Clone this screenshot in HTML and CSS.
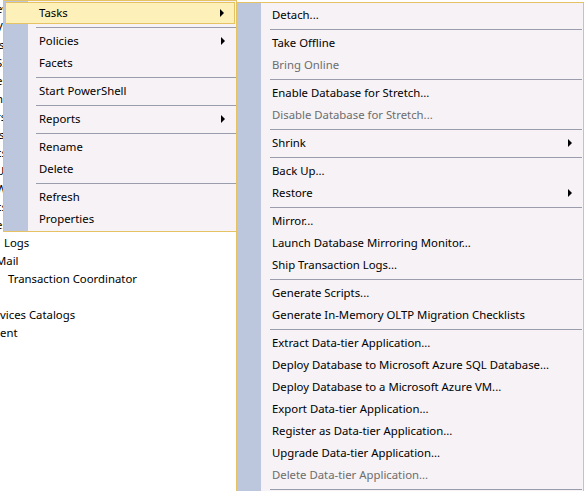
FILE: index.html
```html
<!DOCTYPE html>
<html lang="en">
<head>
  <meta charset="UTF-8">
  <title>Tasks menu</title>
  <link rel="stylesheet" href="styles.css">
</head>
<body>
  <!-- object explorer behind the context menu -->
  <div class="tree">
    <div class="node cut">ew</div>
    <div class="node cut">Vs</div>
    <div class="node cut">:s</div>
    <div class="node cut">Ss</div>
    <div class="node cut">es</div>
    <div class="node cut">hs</div>
    <div class="node cut">rs</div>
    <div class="node cut">ls</div>
    <div class="node cut">cs</div>
    <div class="node cut">Us</div>
    <div class="node cut">Ws</div>
    <div class="node cut">cs</div>
    <div class="node cut">es</div>
    <div class="node logs">Logs</div>
    <div class="node mail">Mail</div>
    <div class="node dtc">Transaction Coordinator</div>
    <div class="node"></div>
    <div class="node">vices Catalogs</div>
    <div class="node">ent</div>
  </div>

  <div class="menu menu-main">
    <div class="item active">Tasks<span class="arrow"></span></div>
    <div class="sep"></div>
    <div class="item">Policies<span class="arrow"></span></div>
    <div class="item">Facets</div>
    <div class="sep"></div>
    <div class="item">Start PowerShell</div>
    <div class="sep"></div>
    <div class="item">Reports<span class="arrow"></span></div>
    <div class="sep"></div>
    <div class="item">Rename</div>
    <div class="item">Delete</div>
    <div class="sep"></div>
    <div class="item">Refresh</div>
    <div class="item">Properties</div>
  </div>

  <div class="menu menu-sub">
    <div class="item">Detach...</div>
    <div class="sep"></div>
    <div class="item">Take Offline</div>
    <div class="item disabled">Bring Online</div>
    <div class="sep"></div>
    <div class="item">Enable Database for Stretch...</div>
    <div class="item disabled">Disable Database for Stretch...</div>
    <div class="sep"></div>
    <div class="item">Shrink<span class="arrow"></span></div>
    <div class="sep"></div>
    <div class="item">Back Up...</div>
    <div class="item">Restore<span class="arrow"></span></div>
    <div class="sep"></div>
    <div class="item">Mirror...</div>
    <div class="item">Launch Database Mirroring Monitor...</div>
    <div class="item">Ship Transaction Logs...</div>
    <div class="sep"></div>
    <div class="item">Generate Scripts...</div>
    <div class="item">Generate In-Memory OLTP Migration Checklists</div>
    <div class="sep"></div>
    <div class="item">Extract Data-tier Application...</div>
    <div class="item">Deploy Database to Microsoft Azure SQL Database...</div>
    <div class="item">Deploy Database to a Microsoft Azure VM...</div>
    <div class="item">Export Data-tier Application...</div>
    <div class="item">Register as Data-tier Application...</div>
    <div class="item">Upgrade Data-tier Application...</div>
    <div class="item disabled">Delete Data-tier Application...</div>
    <div class="sep"></div>
    <div class="item">Import Data...</div>
    <div class="item">Export Data...</div>
  </div>
</body>
</html>
```

FILE: styles.css
```css
html, body {
  margin: 0;
  padding: 0;
  height: 100%;
  overflow: hidden;
}
body {
  position: relative;
  background: #fff;
  color: #000;
  font-family: "Noto Sans", "Open Sans", sans-serif;
  font-size: 11.35px;
}

.tree {
  padding-top: 0;
}
.node {
  height: 18px;
  line-height: 18px;
  white-space: nowrap;
}
.node.cut {
  margin-left: -4px;
}
.node.logs {
  margin-left: 4px;
}
.node.mail {
  margin-left: -4px;
}
.node.dtc {
  margin-left: 8px;
}

.menu {
  position: absolute;
  box-sizing: border-box;
  border: 1px solid #e5c365;
  padding: 1px 0;
  background: linear-gradient(to right, #bcc7de 24px, #f6f2f6 24px);
}
.menu-main {
  left: 3px;
  top: 0;
  width: 234px;
}
.menu-sub {
  left: 236px;
  top: 2px;
  width: 348px;
}

.item {
  position: relative;
  box-sizing: border-box;
  height: 22px;
  line-height: 22px;
  padding-left: 35px;
  white-space: nowrap;
}
.item.disabled {
  color: #6d6d6d;
}
.item.active {
  margin: 0 1px;
  border: 1px solid #e5c365;
  background: #fdf0b8;
  line-height: 20px;
  padding-left: 33px;
}
.arrow {
  position: absolute;
  right: 11px;
  top: 7px;
  width: 0;
  height: 0;
  border-style: solid;
  border-width: 4px 0 4px 4px;
  border-color: transparent transparent transparent #000;
}
.item.active .arrow {
  right: 10px;
  top: 6px;
}

.sep {
  height: 6px;
  margin-left: 32px;
  position: relative;
}
.sep::after {
  content: "";
  position: absolute;
  left: 0;
  right: 0;
  top: 3px;
  border-top: 1px solid #9a9dab;
}
.menu-sub .sep {
  margin-left: 33px;
  margin-right: 1px;
}
```
